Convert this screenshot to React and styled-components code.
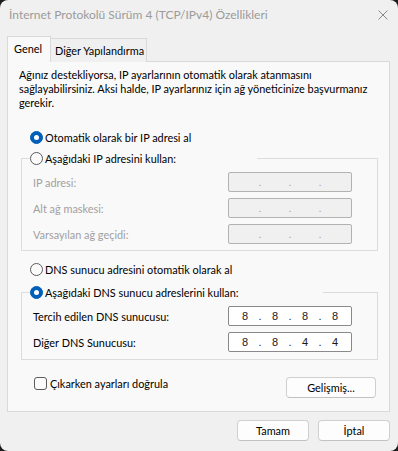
import React from 'react';
import styled, { createGlobalStyle } from 'styled-components';

const Global = createGlobalStyle`
  html, body { margin: 0; padding: 0; background: #1c1c1c; }
  body { font-family: Lato, "Noto Sans", sans-serif; font-size: 10.9px; }
  * { box-sizing: border-box; }
`;

const Window = styled.div`
  width: 398px;
  height: 451px;
  background: #f0f0f0;
  border-radius: 8px;
  overflow: hidden;
  display: flex;
  flex-direction: column;
  color: #000;
`;

const TitleBar = styled.div`
  height: 29px;
  display: flex;
  align-items: center;
  justify-content: space-between;
  padding: 0 10px 0 9px;
  color: #9b9b9b;
  font-size: 12px;
`;

const TabRow = styled.div`
  display: flex;
  align-items: flex-end;
  height: 26px;
  margin-top: 7px;
  padding-left: 7px;
`;

const Tab = styled.div`
  position: relative;
  z-index: ${p => (p.$active ? 1 : 0)};
  width: ${p => p.$width}px;
  height: ${p => (p.$active ? '26px' : '24px')};
  padding: 0 0 ${p => (p.$active ? '2px' : '1px')} ${p => (p.$active ? '6px' : '4px')};
  display: flex;
  align-items: center;
  background: ${p => (p.$active ? '#f9f9f9' : '#f0f0f0')};
  border: 1px solid #d9d9d9;
  border-bottom: none;
  border-left: ${p => (p.$active ? '1px solid #d9d9d9' : 'none')};
  white-space: nowrap;
`;

const Panel = styled.div`
  margin: -1px 8px 0 7px;
  border: 1px solid #d9d9d9;
  background: #f9f9f9;
  padding: 6px 11px 13px 11px;
  display: flex;
  flex-direction: column;
`;

const Description = styled.p`
  margin: 0;
  line-height: 14px;
  white-space: nowrap;
`;

const RadioRow = styled.label`
  display: flex;
  align-items: center;
  gap: 2px;
  height: 16px;
  margin-left: 11px;
  margin-top: ${p => p.$top || 0}px;
`;

const RadioDot = styled.span`
  width: 13px;
  height: 13px;
  border-radius: 50%;
  flex: none;
  background: ${p => (p.$checked ? '#005fb8' : '#fbfbfb')};
  border: 1px solid ${p => (p.$checked ? '#005fb8' : '#5c5c5c')};
  display: flex;
  align-items: center;
  justify-content: center;
  &::after {
    content: '';
    display: ${p => (p.$checked ? 'block' : 'none')};
    width: 5px;
    height: 5px;
    border-radius: 50%;
    background: #fff;
  }
`;

const Group = styled.fieldset`
  margin: ${p => p.$top}px 0 0 2px;
  padding: 6px 25px ${p => p.$bottom}px 11px;
  border: 1px solid #dcdcdc;
  display: flex;
  flex-direction: column;
  gap: 6px;
  min-width: 0;
`;

const Legend = styled.legend`
  padding: 0;
  margin-left: -3px;
  width: ${p => p.$width}px;
  height: 16px;
`;

const LegendRow = styled.span`
  display: flex;
  align-items: center;
  gap: 2px;
  height: 16px;
`;

const FieldRow = styled.div`
  display: flex;
  align-items: center;
  justify-content: space-between;
  height: 20px;
  color: ${p => (p.$disabled ? '#a0a0a0' : '#000')};
`;

const IpBox = styled.div`
  width: 124px;
  height: 20px;
  border: 1px solid ${p => (p.$disabled ? '#b2b2b2' : '#8a8a8a')};
  border-radius: 2px;
  background: ${p => (p.$disabled ? '#f0f0f0' : '#ffffff')};
  display: flex;
  align-items: center;
  padding-left: 5px;
  font-family: "Liberation Sans", Arial, sans-serif;
  font-size: 11px;
  color: ${p => (p.$disabled ? '#a0a0a0' : '#1a1a1a')};
`;

const Octet = styled.span`
  width: 22px;
  text-align: center;
`;

const Dot = styled.span`
  width: 8px;
  text-align: center;
`;

const BottomRow = styled.div`
  display: flex;
  align-items: flex-start;
  justify-content: space-between;
  margin-top: 17px;
  padding: 0 2px 0 15px;
`;

const CheckLabel = styled.label`
  display: flex;
  align-items: center;
  gap: 3px;
  height: 13px;
`;

const CheckBox = styled.span`
  width: 13px;
  height: 13px;
  border: 1px solid #5c5c5c;
  border-radius: 3px;
  background: #fbfbfb;
  flex: none;
`;

const Button = styled.button`
  width: ${p => p.$width || 72}px;
  height: 21px;
  border: 1px solid #d0d0d0;
  border-bottom-color: #c2c2c2;
  border-radius: 4px;
  background: #fdfdfd;
  font-family: inherit;
  font-size: inherit;
  color: #000;
  padding: 0;
`;

const Footer = styled.div`
  display: flex;
  justify-content: flex-end;
  gap: 9px;
  padding: 8px 8px 0 0;
`;

function Radio({ checked, children, ...rest }) {
  return (
    <RadioRow {...rest}>
      <RadioDot $checked={checked} />
      <span>{children}</span>
    </RadioRow>
  );
}

function IpField({ label, value, disabled }) {
  const parts = value ? value.split('.') : ['', '', '', ''];
  return (
    <FieldRow $disabled={disabled}>
      <span>{label}</span>
      <IpBox $disabled={disabled}>
        {parts.map((p, i) => (
          <React.Fragment key={i}>
            <Octet>{p}</Octet>
            {i < 3 && <Dot>.</Dot>}
          </React.Fragment>
        ))}
      </IpBox>
    </FieldRow>
  );
}

export default function App() {
  return (
    <>
      <Global />
      <Window>
        <TitleBar>
          <span>İnternet Protokolü Sürüm 4 (TCP/IPv4) Özellikleri</span>
          <svg width="10" height="10" viewBox="0 0 10 10">
            <path d="M0.5 0.5 L9.5 9.5 M9.5 0.5 L0.5 9.5" stroke="#8a8a8a" strokeWidth="1" />
          </svg>
        </TitleBar>
        <TabRow>
          <Tab $active $width={44}>Genel</Tab>
          <Tab $width={96}>Diğer Yapılandırma</Tab>
        </TabRow>
        <Panel>
          <Description>
            Ağınız destekliyorsa, IP ayarlarının otomatik olarak atanmasını
            <br />
            sağlayabilirsiniz. Aksi halde, IP ayarlarınız için ağ yöneticinize başvurmanız
            <br />
            gerekir.
          </Description>
          <Radio checked $top={19}>Otomatik olarak bir IP adresi al</Radio>
          <Group $top={5} $bottom={6}>
            <Legend $width={227}>
              <LegendRow>
                <RadioDot />
                <span>Aşağıdaki IP adresini kullan:</span>
              </LegendRow>
            </Legend>
            <IpField label="IP adresi:" disabled />
            <IpField label="Alt ağ maskesi:" disabled />
            <IpField label="Varsayılan ağ geçidi:" disabled />
          </Group>
          <Radio $top={10}>DNS sunucu adresini otomatik olarak al</Radio>
          <Group $top={7} $bottom={7}>
            <Legend $width={293}>
              <LegendRow>
                <RadioDot $checked />
                <span>Aşağıdaki DNS sunucu adreslerini kullan:</span>
              </LegendRow>
            </Legend>
            <IpField label="Tercih edilen DNS sunucusu:" value="8.8.8.8" />
            <IpField label="Diğer DNS Sunucusu:" value="8.8.4.4" />
          </Group>
          <BottomRow>
            <CheckLabel>
              <CheckBox />
              <span>Çıkarken ayarları doğrula</span>
            </CheckLabel>
            <Button $width={90}>Gelişmiş...</Button>
          </BottomRow>
        </Panel>
        <Footer>
          <Button>Tamam</Button>
          <Button>İptal</Button>
        </Footer>
      </Window>
    </>
  );
}
